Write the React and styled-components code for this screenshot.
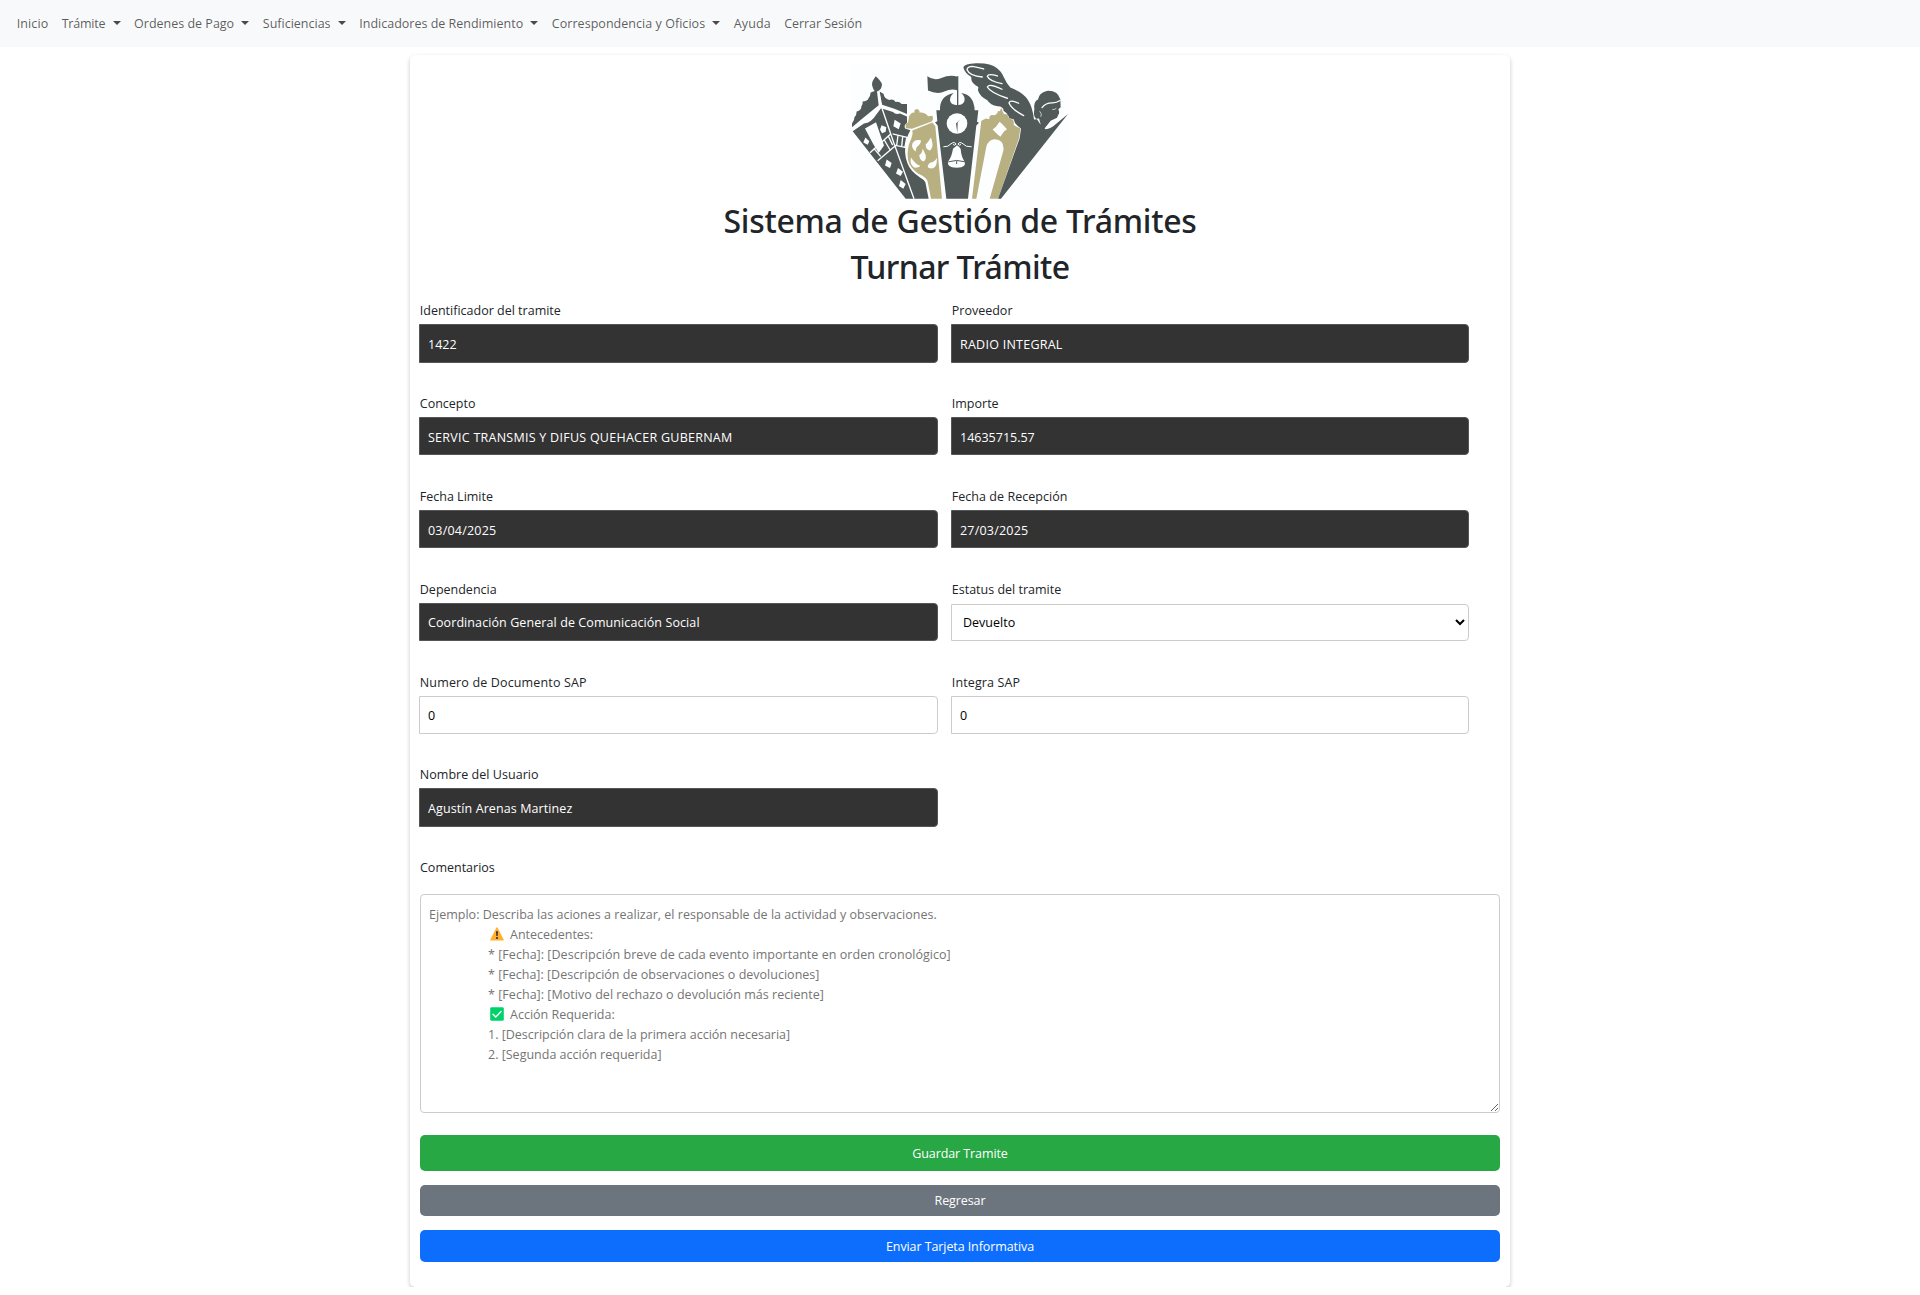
import React from 'react';
import styled, { createGlobalStyle } from 'styled-components';

const GlobalStyle = createGlobalStyle`
  *, *::before, *::after { box-sizing: border-box; }
  body {
    margin: 0;
    background: #fff;
    color: #212529;
    font-family: "Segoe UI", "Open Sans", "Noto Sans", sans-serif;
    font-size: 12.5px;
    line-height: 20px;
  }
`;

const Navbar = styled.nav`
  display: flex;
  align-items: center;
  height: 47px;
  padding: 0 10px;
  background: #f8f9fa;
`;

const NavItem = styled.a`
  display: flex;
  align-items: center;
  padding: 0 6.7px;
  color: rgba(0, 0, 0, 0.65);
  text-decoration: none;
  white-space: nowrap;
  letter-spacing: ${(p) => p.$tracking || 0}px;
`;

const Caret = styled.span`
  width: 8px;
  margin-left: 7.3px;
  margin-top: -1px;
  border: 4px solid transparent;
  border-top-color: rgba(0, 0, 0, 0.7);
  border-bottom: 0;
`;

const Card = styled.main`
  display: flex;
  flex-direction: column;
  width: 1100px;
  height: 1232px;
  margin: 8px auto 0;
  padding: 8px 10px 0;
  background: #fff;
  border-radius: 5px;
  box-shadow: 0 2px 4px rgba(0, 0, 0, 0.22);
`;

const LogoSvg = styled.svg`
  display: block;
  flex: none;
  width: 216px;
  height: 136px;
  margin: 0 auto 3px;
`;

const Title = styled.h1`
  margin: 0 0 7.6px;
  font-family: "Segoe UI", "Noto Sans", sans-serif;
  font-size: 32px;
  font-weight: 500;
  line-height: 38.4px;
  text-align: center;
  letter-spacing: ${(p) => p.$tracking}px;
`;

const Fields = styled.div`
  display: grid;
  grid-template-columns: 519px 518px;
  grid-auto-rows: 92.9px;
  column-gap: 13px;
  margin: 7px 0 0 -1px;
`;

const Field = styled.label`
  display: flex;
  flex-direction: column;
`;

const Label = styled.span`
  height: 20px;
  margin-bottom: ${(p) => (p.$loose ? 4 : 3)}px;
  padding-left: 0.8px;
  letter-spacing: ${(p) => p.$tracking || 0}px;
`;

const Input = styled.input`
  width: 100%;
  height: 38.6px;
  padding: 2px 8px 0;
  border: 1px solid ${(p) => (p.readOnly ? '#555' : '#ccc')};
  border-radius: 0 4px 4px 0;
  background: ${(p) => (p.readOnly ? '#333' : '#fff')};
  color: ${(p) => (p.readOnly ? '#fff' : '#000')};
  font: inherit;
  letter-spacing: ${(p) => p.$tracking || 0}px;
  outline: none;
`;

const Select = styled.select`
  width: 100%;
  height: 37px;
  padding: 1px 0 0 7px;
  border: 1px solid #ccc;
  border-radius: 0 4px 4px 0;
  background: #fff;
  color: #000;
  font: inherit;
`;

const CommentsLabel = styled.label`
  height: 36px;
`;

const CommentBox = styled.div`
  display: grid;
  height: 219px;
  margin-bottom: 22px;
  & > * { grid-area: 1 / 1; }
`;

const Textarea = styled.textarea`
  width: 100%;
  height: 100%;
  margin: 0;
  padding: 10px 8px;
  border: 1px solid #ccc;
  border-radius: 4px;
  background: #fff;
  font: inherit;
  outline: none;
`;

const Hint = styled.div`
  padding: 11px 9px;
  color: #757575;
  pointer-events: none;
  white-space: nowrap;
`;

const HintLine = styled.div`
  display: flex;
  align-items: center;
  height: 20px;
  padding-left: ${(p) => (p.$indent ? 59 : 0)}px;
  letter-spacing: ${(p) => p.$tracking || 0}px;
`;

const HintIcon = styled.svg`
  width: 14px;
  height: 14px;
  margin: 0 6.5px 2px 1.5px;
`;

const Button = styled.button`
  flex: none;
  width: 100%;
  height: ${(p) => p.$height}px;
  margin: 0 0 14px;
  padding: 1px 0 0;
  border: 0;
  border-radius: 5px;
  background: ${(p) => p.$color};
  color: #fff;
  font: inherit;
  letter-spacing: -0.09px;
`;

const DARK = '#515a59';
const GOLD = '#b9b082';

function Logo() {
  return (
    <LogoSvg viewBox="36 38 648 409" preserveAspectRatio="none" role="img">
      <rect x="36" y="38" width="648" height="409" fill="#fdfeff" />
      {/* church tower */}
      <g fill={DARK}>
        <path d="M107 78C101 88 94 95 97 108Q99 116 104 122L92 127Q91 139 85 145Q83 153 68 154Q69 164 64 169Q65 180 50 184Q50 196 43 202Q44 210 36 220V231L60 211L116 165L111 124Q125 119 126 103Q123 91 107 78Z" />
        <path d="M119 124L131 131Q132 144 148 149Q160 145 167 155Q178 153 185 161L201 161V191L165 176L124 163Z" />
        <path d="M38 243L72 220Q94 218 109 193L123 174L159 185Q166 194 180 190L201 199V218Q191 225 195 235L211 240Q203 254 199 270Q190 305 202 339Q211 364 240 382Q252 388 256 397L266 446H197Z" />
      </g>
      <g fill="#fdfeff">
        <path d="M75 235L108 216L132 286L116 309L100 282Z" />
        <path d="M125 225L139 231L137 245L126 249L120 238ZM164 209L182 220L176 237L160 228ZM76 262L88 273L83 284L70 277Z" />
        <path d="M140 328L155 339L150 354L135 346ZM174 354L189 365L182 378L168 370ZM182 390L197 402L190 416L177 408Z" />
      </g>
      <g fill="none" stroke="#fdfeff" strokeWidth="4">
        <path d="M117 126L127 177L161 277L222 446M90 308L151 252M113 332L167 286L203 293M158 251L207 263M101 294L122 319M132 268L150 299M144 256L158 285M174 255L170 286M188 260L185 289M200 264L195 291" />
      </g>
      {/* golden lantern */}
      <g fill={GOLD}>
        <path d="M198 234Q194 218 204 218L207 199Q214 185 224 187Q220 178 231 176Q241 180 238 187Q255 185 264 198L277 197Q282 208 275 214L216 236Z" />
        <path d="M217 241L277 217L286 228L306 446H273L263 394Q260 382 235 371Q209 353 204 329Q199 295 214 265Q220 252 217 241Z" />
      </g>
      <g fill="#fdfeff">
        <path d="M243 270Q217 267 216 287Q218 300 228 304Q226 292 236 286Q243 280 243 270ZM273 262Q264 277 257 283Q257 299 270 301Q280 292 277 278ZM248 295Q247 309 238 315Q238 330 250 334Q260 330 257 315ZM213 322Q208 343 224 353Q241 352 240 347Q224 340 213 322ZM291 323Q284 336 270 338Q258 350 267 354Q287 359 290 339Z" />
      </g>
      {/* clock tower and flag */}
      <g fill={DARK}>
        <path d="M262 78Q281 92 304 83Q329 72 353 79V121Q335 114 315 123Q293 134 264 121Z" />
        <path d="M351 78H355V166H351Z" />
        <path d="M289 180H300Q298 137 341 128Q325 141 332 156Q338 165 352 164Q369 165 373 153Q377 140 364 128Q402 134 404 180H415L411 215L417 218L409 226L384 446H319L293 226L285 216L292 213Z" />
      </g>
      <circle cx="351" cy="220" r="31" fill="#fdfeff" />
      <path d="M361 207L353 217L352 249L348 220Z" fill={DARK} />
      <path d="M351 285Q344 292 339 296Q335 320 326 332Q317 352 350 353Q383 352 372 332Q364 320 362 297Q359 289 351 285Z" fill="#fdfeff" />
      <path d="M326 335Q350 327 374 335M350 333V342" fill="none" stroke={DARK} strokeWidth="3" />
      <path d="M310 290Q325 291 333 281Q344 273 348 282Q345 288 339 283M395 290Q376 291 369 281Q358 273 354 282Q357 288 363 283" fill="none" stroke="#fdfeff" strokeWidth="3" />
      {/* golden arch */}
      <path d="M424 212L438 205L448 207Q447 193 460 195Q472 194 474 182L479 183L484 173L488 184Q490 195 503 191Q503 207 517 207Q523 212 521 224Q531 232 541 234L537 264L474 446H449L490 302Q494 268 465 267Q445 267 439 290L409 446H396Z" fill={GOLD} />
      <path d="M479 215L487 222L501 237L492 244L481 260L472 252L458 238L468 230Z" fill="#fdfeff" />
      {/* winged victory */}
      <g fill={DARK}>
        <path d="M370 51Q373 41 408 39Q454 38 470 53Q485 64 491 80Q499 98 511 112Q548 126 563 148Q578 171 582 208L591 207L601 222L611 220Q609 234 617 237Q633 236 645 224L684 191L483 446H474L539 264L543 235Q523 222 521 207L508 204Q503 188 491 182Q490 168 473 168Q451 165 442 150Q420 140 414 121L415 110Q391 98 394 80Q374 69 370 51Z" />
        <path d="M583 178Q580 154 594 148Q597 127 620 122Q652 119 661 147L662 171L655 177Q660 188 655 194L651 203L632 212L613 236L603 226L597 205L588 206Q579 196 583 178Z" />
      </g>
      <g fill="none" stroke="#fdfeff" strokeWidth="4" strokeLinecap="round">
        <path d="M427 80Q389 77 381 58Q382 48 398 48Q416 51 431 56M486 100Q448 93 442 78Q445 68 472 77M502 144Q451 127 442 110Q448 98 486 117M551 196Q516 178 507 158Q510 147 536 159" />
        <path d="M606 172Q618 157 638 158Q650 158 660 151" />
        <path d="M600 184Q607 190 603 199M638 178Q643 180 648 175" strokeWidth="2" />
      </g>
    </LogoSvg>
  );
}

const navItems = [
  { text: 'Inicio', tracking: 0.1 },
  { text: 'Trámite', menu: true, tracking: -0.2 },
  { text: 'Ordenes de Pago', menu: true },
  { text: 'Suficiencias', menu: true },
  { text: 'Indicadores de Rendimiento', menu: true },
  { text: 'Correspondencia y Oficios', menu: true, tracking: 0.04 },
  { text: 'Ayuda', tracking: 0.1 },
  { text: 'Cerrar Sesión', tracking: -0.05 },
];

const fields = [
  { label: 'Identificador del tramite', value: '1422', locked: true },
  { label: 'Proveedor', value: 'RADIO INTEGRAL', locked: true, tracking: 0.25 },
  { label: 'Concepto', value: 'SERVIC TRANSMIS Y DIFUS QUEHACER GUBERNAM', locked: true, tracking: 0.26 },
  { label: 'Importe', value: '14635715.57', locked: true },
  { label: 'Fecha Limite', value: '03/04/2025', locked: true, tracking: 0.2 },
  { label: 'Fecha de Recepción', value: '27/03/2025', locked: true, tracking: 0.2, labelTracking: 0.04 },
  { label: 'Dependencia', value: 'Coordinación General de Comunicación Social', locked: true, tracking: 0.09 },
  { label: 'Estatus del tramite', options: ['Devuelto'] },
  { label: 'Numero de Documento SAP', value: '0', labelTracking: 0.15 },
  { label: 'Integra SAP', value: '0', labelTracking: 0.12 },
  { label: 'Nombre del Usuario', value: 'Agustín Arenas Martinez', locked: true, tracking: 0.1, labelTracking: 0.04 },
];

function WarningIcon() {
  return (
    <HintIcon viewBox="0 0 14 14">
      <path d="M7 .8 13.2 13H.8Z" fill="#ffb02e" stroke="#ffb02e" strokeWidth="1.2" strokeLinejoin="round" />
      <path d="M6.1 4.2h1.8L7.6 9H6.4Z" fill="#321b41" />
      <circle cx="7" cy="11" r="1" fill="#321b41" />
    </HintIcon>
  );
}

function CheckIcon() {
  return (
    <HintIcon viewBox="0 0 14 14">
      <rect x="0.2" y="0.2" width="13.6" height="13.6" rx="1.4" fill="#00d26a" />
      <path d="m3 7.2 2.8 2.9L11 4.6" fill="none" stroke="#fff" strokeWidth="1.4" strokeLinecap="round" />
    </HintIcon>
  );
}

export default function App() {
  return (
    <>
      <GlobalStyle />
      <Navbar>
        {navItems.map((item) => (
          <NavItem key={item.text} $tracking={item.tracking}>
            {item.text}
            {item.menu && <Caret />}
          </NavItem>
        ))}
      </Navbar>
      <Card>
        <Logo />
        <Title $tracking={-0.27}>Sistema de Gestión de Trámites</Title>
        <Title as="h2" $tracking={-0.6}>Turnar Trámite</Title>
        <Fields>
          {fields.map((f) => (
            <Field key={f.label}>
              <Label $tracking={f.labelTracking} $loose={!!f.options}>{f.label}</Label>
              {f.options ? (
                <Select>
                  {f.options.map((o) => <option key={o}>{o}</option>)}
                </Select>
              ) : (
                <Input defaultValue={f.value} readOnly={!!f.locked} $tracking={f.tracking} />
              )}
            </Field>
          ))}
        </Fields>
        <CommentsLabel htmlFor="comentarios">Comentarios</CommentsLabel>
        <CommentBox>
          <Textarea id="comentarios" />
          <Hint>
            <HintLine $tracking={0.02}>Ejemplo: Describa las aciones a realizar, el responsable de la actividad y observaciones.</HintLine>
            <HintLine $indent><WarningIcon />Antecedentes:</HintLine>
            <HintLine $indent $tracking={0.04}>* [Fecha]: [Descripción breve de cada evento importante en orden cronológico]</HintLine>
            <HintLine $indent $tracking={0.01}>* [Fecha]: [Descripción de observaciones o devoluciones]</HintLine>
            <HintLine $indent $tracking={0.04}>* [Fecha]: [Motivo del rechazo o devolución más reciente]</HintLine>
            <HintLine $indent><CheckIcon />Acción Requerida:</HintLine>
            <HintLine $indent>1. [Descripción clara de la primera acción necesaria]</HintLine>
            <HintLine $indent>2. [Segunda acción requerida]</HintLine>
          </Hint>
        </CommentBox>
        <Button $height={36} $color="#28a745">Guardar Tramite</Button>
        <Button $height={31} $color="#6c757d">Regresar</Button>
        <Button $height={32} $color="#0d6efd">Enviar Tarjeta Informativa</Button>
      </Card>
    </>
  );
}
